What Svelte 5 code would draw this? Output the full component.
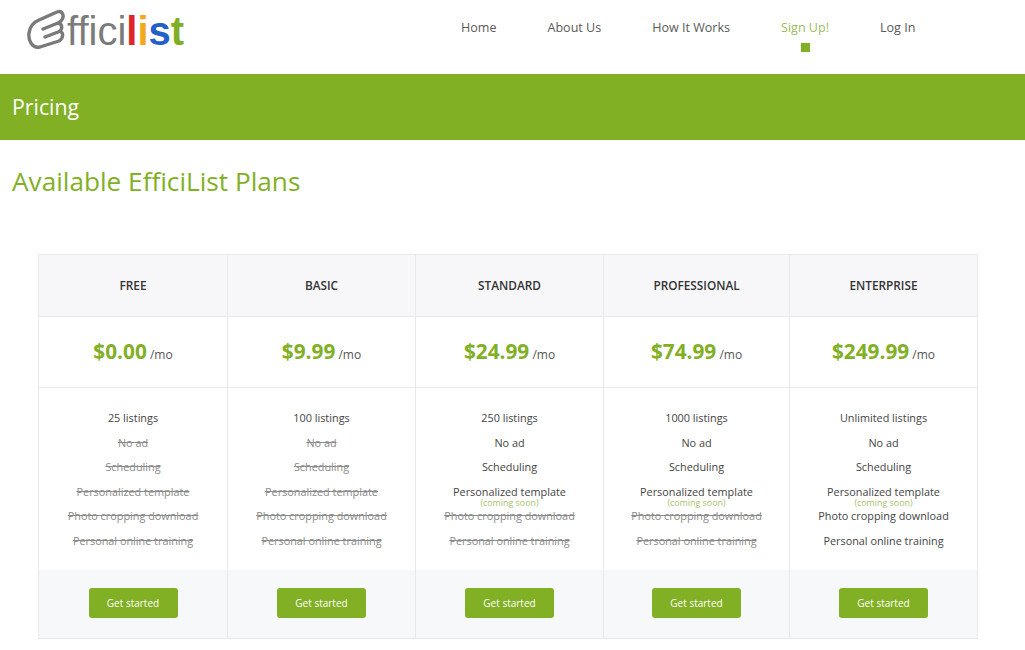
<script>
  const features = ['listings', 'No ad', 'Scheduling', 'Personalized template', 'Photo cropping download', 'Personal online training'];
  const plans = [
    { name: 'FREE', price: '$0.00', count: '25 listings', on: 0, soon: false, w: 189 },
    { name: 'BASIC', price: '$9.99', count: '100 listings', on: 0, soon: false, w: 188 },
    { name: 'STANDARD', price: '$24.99', count: '250 listings', on: 3, soon: true, w: 188 },
    { name: 'PROFESSIONAL', price: '$74.99', count: '1000 listings', on: 3, soon: true, w: 186 },
    { name: 'ENTERPRISE', price: '$249.99', count: 'Unlimited listings', on: 5, soon: true, w: 187 }
  ];
  const links = ['Home', 'About Us', 'How It Works', 'Sign Up!', 'Log In'];
</script>

<header class="top">
  <div class="logo">
    <svg class="clip" width="42" height="44" viewBox="0 0 42 44" aria-hidden="true">
      <path d="M19 28 L32 23 C38 21 38 29 33 32 L14 38 C6 40 2 31 3 24 C4 17 8 13 13 11 L31 3 C37 1 39 8 35 12 C34 13 33 13 32 14 L17 20 M32 14 C37 15 37 21 32 23" fill="none" stroke="#7a7a7a" stroke-width="3.4" stroke-linecap="round" stroke-linejoin="round"/>
    </svg>
    <span class="lt">ffici</span><span class="l0">l</span><span class="l1">i</span><span class="l2">s</span><span class="l3">t</span>
  </div>
  <nav>
    {#each links as l}
      <a class:active={l === 'Sign Up!'} href="#top">{l}</a>
    {/each}
  </nav>
</header>

<div class="band">Pricing</div>

<main>
  <h1>Available EfficiList Plans</h1>
  <div class="table">
    {#each plans as p}
      <section class="col" style="width:{p.w}px">
        <div class="head">{p.name}</div>
        <div class="price"><strong>{p.price}</strong> <span>/mo</span></div>
        <ul>
          <li>{p.count}</li>
          {#each features.slice(1) as f, i}
            <li class:off={i + 1 > p.on}>
              {f}
              {#if i === 2 && p.soon}<small>(coming soon)</small>{/if}
            </li>
          {/each}
        </ul>
        <div class="foot"><button>Get started</button></div>
      </section>
    {/each}
  </div>
</main>

<style>
  :global(body) {
    margin: 0;
    background: #fff;
    font-family: "Open Sans", "Noto Sans", sans-serif;
    color: #444;
  }
  .top {
    height: 74px;
    display: flex;
  }
  .logo {
    display: flex;
    align-items: center;
    flex: none;
    width: 435px;
    box-sizing: border-box;
    padding-left: 26px;
    font-family: "Liberation Sans", sans-serif;
    font-size: 40px;
    height: 62px;
  }
  .clip { margin-right: -1px; flex: none; }
  .lt { color: #7b7b7b; }
  .l0 { color: #e0262b; font-weight: 700; }
  .l1 { color: #f2a91b; font-weight: 700; }
  .l2 { color: #2360c8; font-weight: 700; }
  .l3 { color: #7fae24; font-weight: 700; }
  nav {
    display: flex;
    margin-left: 26px;
    gap: 51px;
    padding-top: 19px;
    font-size: 12.55px;
    line-height: 18px;
  }
  nav a {
    color: #5a5a5a;
    text-decoration: none;
    position: relative;
    height: 18px;
  }
  nav a.active { color: #9cbc5c; }
  nav a.active::after {
    content: "";
    position: absolute;
    left: 50%;
    margin-left: -4.5px;
    top: 24px;
    width: 9px;
    height: 9px;
    background: #82b025;
  }
  .band {
    height: 66px;
    background: #82b025;
    color: #fff;
    font-size: 21.3px;
    line-height: 66px;
    padding-left: 12px;
  }
  h1 {
    margin: 0;
    padding: 24px 0 0 12px;
    font-size: 26.2px;
    line-height: 34px;
    font-weight: 400;
    color: #82b025;
  }
  .table {
    display: flex;
    width: 938px;
    margin: 56px 0 0 38px;
    border: 1px solid #e8e8ee;
  }
  .col {
    box-sizing: border-box;
    border-right: 1px solid #e8e8ee;
    text-align: center;
    flex: none;
  }
  .col:last-child { border-right: 0; }
  .head {
    height: 62px;
    line-height: 60px;
    background: #f7f7fa;
    border-bottom: 1px solid #e8e8ee;
    box-sizing: border-box;
    font-size: 11.8px;
    font-weight: 600;
    color: #333;
  }
  .price {
    height: 71px;
    box-sizing: border-box;
    border-bottom: 1px solid #e8e8ee;
    line-height: 69px;
    font-size: 12px;
    color: #555;
  }
  .price strong {
    font-size: 20.8px;
    font-weight: 700;
    color: #82b025;
  }
  ul {
    list-style: none;
    margin: 0;
    padding: 18px 0 0;
    height: 182px;
    box-sizing: border-box;
    font-size: 10.85px;
    color: #444;
  }
  li {
    height: 24.6px;
    line-height: 24px;
    position: relative;
  }
  li.off { color: #8a8a8a; text-decoration: line-through; }
  li small {
    position: absolute;
    left: 0;
    right: 0;
    top: 18px;
    font-size: 8.9px;
    line-height: 10px;
    color: #a9c26c;
  }
  .foot {
    height: 68px;
    background: #f7f8fa;
    display: flex;
    align-items: flex-start;
    justify-content: center;
    padding-top: 18px;
    box-sizing: border-box;
  }
  button {
    width: 89px;
    height: 30px;
    border: 0;
    border-radius: 3px;
    background: #82b025;
    color: #fff;
    font: inherit;
    font-size: 10px;
  }
</style>
